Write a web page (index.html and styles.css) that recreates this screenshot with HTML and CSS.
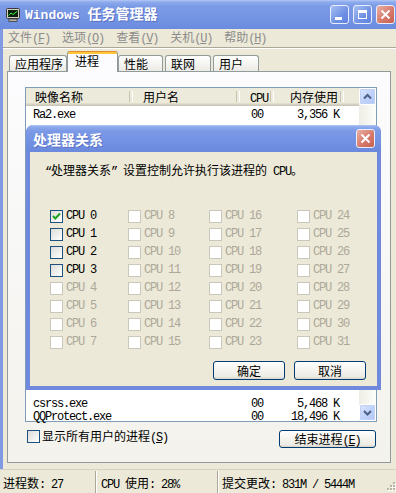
FILE: index.html
```html
<!DOCTYPE html>
<html>
<head>
<meta charset="utf-8">
<title>Windows 任务管理器</title>
<link rel="stylesheet" href="styles.css">
</head>
<body>
<div class="win">
  <div class="titlebar">
    <svg class="appicon" width="16" height="16" viewBox="0 0 16 16">
      <rect x="1.5" y="1.5" width="13" height="10" rx="1" fill="#d4d0c8" stroke="#3a3a3a"/>
      <rect x="3" y="3" width="10" height="7" fill="#0c200c"/>
      <path d="M3.5 8.5 L6 6 L8 7.5 L12.5 4" stroke="#3cf03c" stroke-width="1" fill="none"/>
      <rect x="4" y="12" width="8" height="2.5" fill="#b8b4ac" stroke="#3a3a3a" stroke-width="0.8"/>
    </svg>
    <div class="title"><span class="a">Windows </span>任务管理器</div>
    <div class="tbtn tmin"><svg width="17" height="17" viewBox="0 0 17 17"><rect x="4" y="11" width="7" height="3" fill="#fff"/></svg></div>
    <div class="tbtn tmax"><svg width="17" height="17" viewBox="0 0 17 17"><rect x="4.5" y="4.5" width="8" height="8" fill="none" stroke="#fff"/><rect x="4" y="4" width="9" height="3" fill="#fff"/></svg></div>
    <div class="tbtn tclose"><svg width="17" height="17" viewBox="0 0 17 17"><path d="M4.5 4.5 L12.5 12.5 M12.5 4.5 L4.5 12.5" stroke="#fff" stroke-width="2"/></svg></div>
  </div>

  <div class="frame">
    <div class="menubar">
      <span class="mi">文件<span class="a">(<u>F</u>)</span></span>
      <span class="mi">选项<span class="a">(<u>O</u>)</span></span>
      <span class="mi">查看<span class="a">(<u>V</u>)</span></span>
      <span class="mi">关机<span class="a">(<u>U</u>)</span></span>
      <span class="mi">帮助<span class="a">(<u>H</u>)</span></span>
    </div>
    <div class="msep"></div>

    <div class="tabs">
      <div class="tab t1">应用程序</div>
      <div class="tab sel">进程</div>
      <div class="tab t3">性能</div>
      <div class="tab t4">联网</div>
      <div class="tab t5">用户</div>
    </div>

    <div class="panel">
      <div class="pcontent">
        <div class="list">
          <div class="lmain">
            <div class="lhead">
              <div class="hc c1">映像名称</div>
              <div class="hc c2">用户名</div>
              <div class="hc c3"><span class="a">CPU</span></div>
              <div class="hc c4">内存使用</div>
              <div class="hc c5"></div>
            </div>
            <div class="lbody">
              <div class="row"><div class="c1 r1">Ra2.exe</div><div class="c2"></div><div class="c3 r3">00</div><div class="c4 r4">3,356 K</div></div>
              <div class="spacer"></div>
              <div class="row"><div class="c1 r1">csrss.exe</div><div class="c2"></div><div class="c3 r3">00</div><div class="c4 r4">5,468 K</div></div>
              <div class="row"><div class="c1 r1">QQProtect.exe</div><div class="c2"></div><div class="c3 r3">00</div><div class="c4 r4">18,496 K</div></div>
            </div>
          </div>
          <div class="vscroll">
            <div class="sbtn"><svg width="15" height="15" viewBox="0 0 15 15"><path d="M4 9.5 L7.5 6 L11 9.5" stroke="#4d6185" stroke-width="2" fill="none"/></svg></div>
            <div class="strack"></div>
            <div class="sbtn"><svg width="15" height="15" viewBox="0 0 15 15"><path d="M4 6 L7.5 9.5 L11 6" stroke="#4d6185" stroke-width="2" fill="none"/></svg></div>
          </div>
        </div>
        <div class="prow">
          <div class="chkline"><span class="cb"></span><span class="chktext">显示所有用户的进程<span class="a">(<u>S</u>)</span></span></div>
          <div class="btn endbtn">结束进程<span class="a">(<u>E</u>)</span></div>
        </div>
      </div>
    </div>
  </div>

  <div class="status">
    <div class="sp s1">进程数<span class="a">: 27</span></div>
    <div class="sp s2"><span class="a">CPU </span>使用<span class="a">: 28%</span></div>
    <div class="sp s3">提交更改<span class="a">: 831M / 5444M</span></div>
    <svg class="grip" width="12" height="12" viewBox="0 0 12 12">
      <g fill="#fff"><rect x="10" y="3" width="2" height="2"/><rect x="7" y="6" width="2" height="2"/><rect x="10" y="6" width="2" height="2"/><rect x="4" y="9" width="2" height="2"/><rect x="7" y="9" width="2" height="2"/><rect x="10" y="9" width="2" height="2"/></g>
      <g fill="#b8b4a2"><rect x="9" y="2" width="2" height="2"/><rect x="6" y="5" width="2" height="2"/><rect x="9" y="5" width="2" height="2"/><rect x="3" y="8" width="2" height="2"/><rect x="6" y="8" width="2" height="2"/><rect x="9" y="8" width="2" height="2"/></g>
    </svg>
  </div>

  <div class="dlg">
    <div class="dtitle">
      <span class="dtext">处理器关系</span>
      <div class="tbtn dclose"><svg width="17" height="17" viewBox="0 0 17 17"><path d="M4.5 4.5 L12.5 12.5 M12.5 4.5 L4.5 12.5" stroke="#fff" stroke-width="2"/></svg></div>
    </div>
    <div class="dbody">
      <div class="prompt"><span class="a">“</span>处理器关系<span class="a">” </span>设置控制允许执行该进程的<span class="a"> CPU</span>。</div>
      <div class="grid">
        <div class="gc"><span class="cb on"><svg width="11" height="11" viewBox="0 0 11 11"><path d="M2 5 L4.3 7.5 L9 2.5" stroke="#21a121" stroke-width="2" fill="none"/></svg></span><span class="cl a">CPU 0</span></div>
        <div class="gc"><span class="cb"></span><span class="cl a">CPU 1</span></div>
        <div class="gc"><span class="cb"></span><span class="cl a">CPU 2</span></div>
        <div class="gc"><span class="cb"></span><span class="cl a">CPU 3</span></div>
        <div class="gc"><span class="cb dis"></span><span class="cl a dl">CPU 4</span></div>
        <div class="gc"><span class="cb dis"></span><span class="cl a dl">CPU 5</span></div>
        <div class="gc"><span class="cb dis"></span><span class="cl a dl">CPU 6</span></div>
        <div class="gc"><span class="cb dis"></span><span class="cl a dl">CPU 7</span></div>
        <div class="gc"><span class="cb dis"></span><span class="cl a dl">CPU 8</span></div>
        <div class="gc"><span class="cb dis"></span><span class="cl a dl">CPU 9</span></div>
        <div class="gc"><span class="cb dis"></span><span class="cl a dl">CPU 10</span></div>
        <div class="gc"><span class="cb dis"></span><span class="cl a dl">CPU 11</span></div>
        <div class="gc"><span class="cb dis"></span><span class="cl a dl">CPU 12</span></div>
        <div class="gc"><span class="cb dis"></span><span class="cl a dl">CPU 13</span></div>
        <div class="gc"><span class="cb dis"></span><span class="cl a dl">CPU 14</span></div>
        <div class="gc"><span class="cb dis"></span><span class="cl a dl">CPU 15</span></div>
        <div class="gc"><span class="cb dis"></span><span class="cl a dl">CPU 16</span></div>
        <div class="gc"><span class="cb dis"></span><span class="cl a dl">CPU 17</span></div>
        <div class="gc"><span class="cb dis"></span><span class="cl a dl">CPU 18</span></div>
        <div class="gc"><span class="cb dis"></span><span class="cl a dl">CPU 19</span></div>
        <div class="gc"><span class="cb dis"></span><span class="cl a dl">CPU 20</span></div>
        <div class="gc"><span class="cb dis"></span><span class="cl a dl">CPU 21</span></div>
        <div class="gc"><span class="cb dis"></span><span class="cl a dl">CPU 22</span></div>
        <div class="gc"><span class="cb dis"></span><span class="cl a dl">CPU 23</span></div>
        <div class="gc"><span class="cb dis"></span><span class="cl a dl">CPU 24</span></div>
        <div class="gc"><span class="cb dis"></span><span class="cl a dl">CPU 25</span></div>
        <div class="gc"><span class="cb dis"></span><span class="cl a dl">CPU 26</span></div>
        <div class="gc"><span class="cb dis"></span><span class="cl a dl">CPU 27</span></div>
        <div class="gc"><span class="cb dis"></span><span class="cl a dl">CPU 28</span></div>
        <div class="gc"><span class="cb dis"></span><span class="cl a dl">CPU 29</span></div>
        <div class="gc"><span class="cb dis"></span><span class="cl a dl">CPU 30</span></div>
        <div class="gc"><span class="cb dis"></span><span class="cl a dl">CPU 31</span></div>
      </div>
      <div class="dbtns">
        <div class="btn dbtn">确定</div>
        <div class="btn dbtn">取消</div>
      </div>
    </div>
  </div>
</div>
</body>
</html>
```

FILE: styles.css
```css
* { box-sizing: border-box; }
html, body { margin: 0; padding: 0; }
body {
  width: 396px;
  height: 493px;
  overflow: hidden;
  background: #ece9d8;
  font-family: "Noto Sans CJK SC", sans-serif;
  font-size: 12px;
  line-height: 14px;
  color: #000;
}
.a {
  font-family: "Liberation Mono", "Noto Sans CJK SC", monospace;
  letter-spacing: -1.2px;
}
.win {
  position: relative;
  width: 402px;
  height: 493px;
  display: flex;
  flex-direction: column;
  background: #ece9d8;
}

/* title bar */
.titlebar {
  flex: none;
  height: 29px;
  display: flex;
  align-items: center;
  padding: 0 7px 0 5px;
  background: linear-gradient(#b2c8f4 0, #8eabec 2px, #7c9be6 6px, #7494e3 18px, #6b8bde 29px);
  color: #fff;
}
.appicon { flex: none; margin-right: 4px; }
.title {
  flex: 1;
  font-weight: bold;
  font-size: 14px;
  line-height: 16px;
  white-space: nowrap;
  text-shadow: 1px 1px 0 #5a72c4;
}
.title .a { font-size: 13px; letter-spacing: 0; }
.tbtn {
  flex: none;
  width: 19px;
  height: 19px;
  margin-left: 4px;
  border: 1px solid #e8eefc;
  border-radius: 3px;
  background: linear-gradient(135deg, #a7bff3, #6f90e4 60%, #5f82df);
}
.tbtn svg { display: block; }
.tclose, .dclose {
  background: linear-gradient(135deg, #eab0a5, #d67a6b 55%, #c8604e);
}

/* frame */
.frame {
  flex: 1;
  display: flex;
  flex-direction: column;
  border-left: 3px solid #7f9ae2;
  border-right: 3px solid #7f9ae2;
}
.menubar {
  height: 18px;
  display: flex;
  align-items: center;
  color: #8c8c8c;
  line-height: 18px;
}
.mi { padding: 0 7px 0 5px; white-space: nowrap; }
.msep {
  height: 2px;
  border-top: 1px solid #aca899;
  border-bottom: 1px solid #fff;
  margin-bottom: 2px;
}

/* tabs */
.tabs {
  position: relative;
  z-index: 1;
  height: 21px;
  margin-bottom: -1px;
  padding-left: 6px;
  display: flex;
  align-items: flex-end;
}
.tab {
  height: 16px;
  margin-bottom: 1px;
  padding-left: 5px;
  line-height: 15px;
  border: 1px solid #919b9c;
  border-bottom: none;
  border-radius: 3px 3px 0 0;
  background: linear-gradient(#ffffff, #f3f3ef 60%, #ebeae4);
  white-space: nowrap;
}
.t1 { width: 58px; }
.t3 { width: 45px; }
.t4 { width: 46px; margin-left: 2px; }
.t5 { width: 46px; margin-left: 2px; }
.tab.sel {
  width: 51px;
  height: 21px;
  margin-bottom: 0;
  padding-left: 7px;
  padding-top: 3px;
  line-height: 14px;
  border-top: none;
  background: linear-gradient(#e68b2c 0, #e68b2c 1px, #ffc73c 1px, #ffc73c 3px, #fcfcfe 3px);
}

/* panel */
.panel {
  height: 392px;
  margin: 0 8px 0 4px;
  border: 1px solid #919b9c;
  background: linear-gradient(#fcfcfe, #f3f2ec);
  padding: 15px 0 0 17px;
}
.pcontent { width: 352px; }
.list {
  height: 335px;
  border: 1px solid #7f9db9;
  background: #fff;
  display: flex;
}
.lmain {
  flex: 1;
  display: flex;
  flex-direction: column;
  min-width: 0;
}
.lhead {
  height: 18px;
  display: flex;
  background: #ebeadb;
  box-shadow: inset 0 -1px #cbc7b8, inset 0 -2px #d6d2c2, inset 0 -3px #e2dec9;
  line-height: 18px;
}
.hc { position: relative; white-space: nowrap; }
.hc::after {
  content: "";
  position: absolute;
  right: 0;
  top: 3px;
  bottom: 4px;
  width: 2px;
  border-left: 1px solid #c7c5b2;
  border-right: 1px solid #fff;
}
.hc.c5::after { display: none; }
.c1 { width: 107px; flex: none; }
.c2 { width: 107px; flex: none; }
.c3 { width: 34px; flex: none; }
.c4 { width: 70px; flex: none; }
.c5 { flex: 1; }
.hc.c1 { padding-left: 9px; }
.hc.c2 { padding-left: 10px; }
.hc.c3 { padding-left: 10px; }
.hc.c4 { text-align: right; padding-right: 6px; }

.lbody {
  flex: 1;
  display: flex;
  flex-direction: column;
}
.spacer { flex: 1; }
.row {
  height: 13px;
  display: flex;
  font-family: "Liberation Mono", monospace;
  letter-spacing: -1.2px;
  line-height: 18px;
  white-space: nowrap;
}
.r1 { padding-left: 7px; }
.r3 { padding-left: 11px; }
.r4 { text-align: right; padding-right: 5px; }

.vscroll {
  width: 17px;
  flex: none;
  display: flex;
  flex-direction: column;
  background: linear-gradient(90deg, #eeede5, #fdfdfa);
}
.sbtn {
  height: 17px;
  border: 1px solid #fff;
  border-radius: 2px;
  background: linear-gradient(135deg, #dde7fd, #c1d3fb 50%, #b1c6f6);
  box-shadow: inset 0 0 0 1px #c0d0f6;
}
.sbtn svg { display: block; }
.strack { flex: 1; }

/* bottom row */
.prow {
  margin-top: 8px;
  height: 18px;
  display: flex;
  align-items: flex-start;
  justify-content: space-between;
}
.chkline {
  margin-left: 2px;
  display: flex;
  align-items: center;
  height: 13px;
}
.chktext { margin-left: 2px; line-height: 13px; white-space: nowrap; }
.btn {
  border: 1px solid #003c74;
  border-radius: 3px;
  background: linear-gradient(#ffffff, #f4f3ee 50%, #ecebe4 85%, #d8d4c8);
  text-align: center;
  white-space: nowrap;
}
.endbtn {
  width: 97px;
  height: 18px;
  margin-right: 1px;
  line-height: 16px;
}

/* checkboxes */
.cb {
  flex: none;
  display: block;
  width: 13px;
  height: 13px;
  border: 1px solid #1c5180;
  background: linear-gradient(135deg, #dcdcd7, #ffffff);
}
.cb svg { display: block; }
.cb.dis {
  border-color: #cac8bb;
  background: #ffffff;
}

/* status bar */
.status {
  flex: none;
  height: 24px;
  display: flex;
  align-items: center;
  border-top: 1px solid #d6d2c2;
  white-space: nowrap;
}
.sp {
  height: 22px;
  line-height: 24px;
  border-right: 1px solid #aca899;
  box-shadow: 1px 0 0 #fff;
}
.s1 { width: 96px; padding-left: 3px; }
.s2 { width: 122px; padding-left: 5px; }
.s3 { flex: 1; padding-left: 4px; border-right: none; box-shadow: none; }
.grip { flex: none; align-self: flex-end; margin-right: 6px; margin-bottom: 1px; }

/* dialog */
.dlg {
  position: absolute;
  left: 26px;
  top: 125px;
  width: 355px;
  height: 265px;
  display: flex;
  flex-direction: column;
  border-radius: 7px 7px 0 0;
  background: #7089dc;
}
.dtitle {
  height: 27px;
  flex: none;
  display: flex;
  align-items: center;
  padding: 0 6px 0 7px;
  border-radius: 7px 7px 0 0;
  background: linear-gradient(#b0c5f3 0, #8ea9ec 2px, #7b99e6 6px, #7392e3 16px, #6a89dd 27px);
  color: #fff;
}
.dtext {
  flex: 1;
  font-weight: bold;
  font-size: 14px;
  line-height: 16px;
  text-shadow: 1px 1px 0 #5a72c4;
}
.dbody {
  flex: 1;
  margin: 0 4px 4px;
  background: #ece9d8;
  padding: 10px 11px 6px 15px;
  display: flex;
  flex-direction: column;
}
.prompt { line-height: 16px; white-space: nowrap; }
.grid {
  margin-top: 27px;
  padding-left: 5px;
  display: grid;
  grid-template-columns: 78px 81px 88px auto;
  grid-template-rows: repeat(8, 18px);
  grid-auto-flow: column;
}
.gc { display: flex; align-items: center; }
.cl { margin-left: 3px; line-height: 13px; white-space: nowrap; }
.dl { color: #aca899; }
.dbtns {
  margin-top: auto;
  display: flex;
  justify-content: flex-end;
  gap: 9px;
}
.dbtn {
  width: 72px;
  height: 19px;
  line-height: 17px;
}
```
